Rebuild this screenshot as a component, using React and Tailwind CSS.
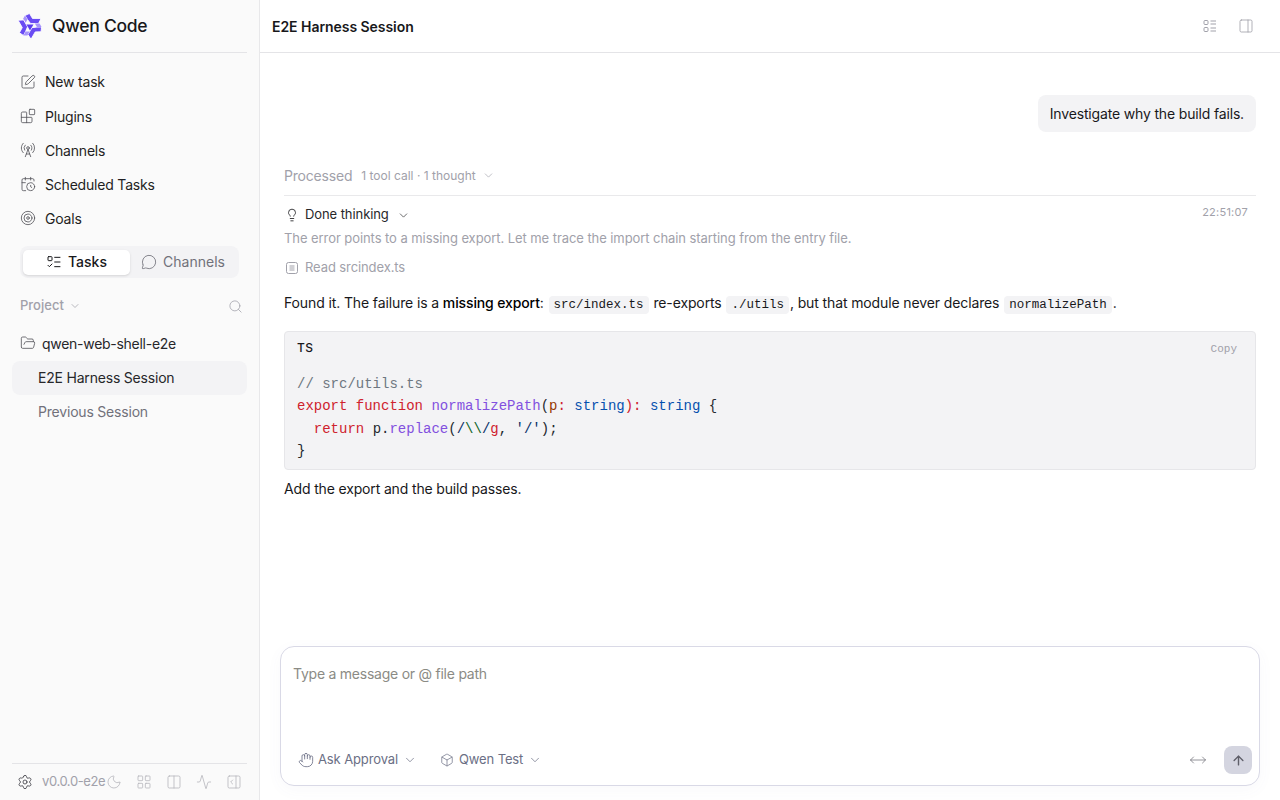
import React from "react";
import { SquarePen, Blocks, RadioTower, CalendarClock, Target, ListTodo, MessageCircle, ChevronDown, Search, FolderOpen, Settings, Moon, LayoutGrid, Columns2, Activity, PanelRightOpen, Lightbulb, Hand, Box, MoveHorizontal, ArrowUp, PanelRight } from "lucide-react";

const Logo = () => (
  <svg width="28" height="28" viewBox="0 0 28 28" fill="none" className="ml-[-1px]">
    {[0, 120, 240].map((r) => (
      <g key={r} transform={`rotate(${r} 14 14)`}>
        <path d="M9 3.5 L13.5 1.5 L16.5 6.5 L25 6.5 L22.5 11.5 L14.5 11.5 L11.5 7.5 Z" fill="#6a4cf3" stroke="#fff" strokeWidth="0.8" strokeLinejoin="round" />
        <path d="M9 3.5 L11.5 7.5 L9.5 11 L7 7 Z" fill="#a794fb" />
      </g>
    ))}
    <path d="M10.5 12.5 L17.5 12.5 L14 18.5 Z" fill="#5b3df0" />
  </svg>
);

const NavRow = ({ icon: Icon, label, className = "h-[34px]" }) => (
  <div className={`flex items-center gap-[9px] pl-[8px] text-[14px] tracking-[-0.2px] text-[#1f1f23] ${className}`}>
    <Icon size={16} strokeWidth={1.25} className="text-[#55555c]" />
    <span>{label}</span>
  </div>
);

const InlineCode = ({ children }) => (
  <code className="mx-[1px] rounded-[4px] bg-[#f3f3f5] px-[5px] py-[2px] font-['Liberation_Mono',monospace] text-[12.5px] tracking-normal text-[#18181b]">{children}</code>
);

const DetailsIcon = () => (
  <svg width="16" height="16" viewBox="0 0 16 16" fill="none" stroke="currentColor" strokeWidth="1">
    <rect x="2" y="2.5" width="4" height="4" rx="1" />
    <rect x="2" y="9.5" width="4" height="4" rx="1" />
    <path d="M8.5 3h5.5M8.5 6h5.5M8.5 10h5.5M8.5 13h5.5" />
  </svg>
);

export default function App() {
  return (
    <div className="flex h-[800px] w-[1280px] overflow-hidden bg-white font-['Inter',sans-serif] text-[#18181b]">
      <aside className="flex h-full w-[260px] shrink-0 flex-col border-r border-[#e8e8ea] bg-[#fafafa] px-[12px]">
        <div className="flex h-[53px] shrink-0 items-center gap-[8px] border-b border-[#e4e4e7] pl-[5px]">
          <Logo />
          <span className="text-[17.5px] font-medium leading-none tracking-[-0.25px] text-[#18181b]">Qwen Code</span>
        </div>
        <nav className="mt-[11px] flex flex-col">
          <NavRow icon={SquarePen} label="New task" className="h-[35px]" />
          <NavRow icon={Blocks} label="Plugins" />
          <NavRow icon={RadioTower} label="Channels" />
          <NavRow icon={CalendarClock} label="Scheduled Tasks" />
          <NavRow icon={Target} label="Goals" />
        </nav>
        <div className="mx-[8px] mt-[11px] flex h-[32px] items-center rounded-[8px] bg-[#f3f3f5] p-[3px] text-[14px]">
          <div className="flex h-[25px] w-[107px] items-center justify-center gap-[6px] rounded-[5px] bg-white pb-[1px] font-medium text-[#18181b] shadow-sm">
            <ListTodo size={16} strokeWidth={1.5} />
            Tasks
          </div>
          <div className="flex h-[25px] flex-1 items-center justify-center gap-[6px] pb-[1px] text-[#71717a]">
            <MessageCircle size={16} strokeWidth={1.25} />
            Channels
          </div>
        </div>
        <div className="mx-[8px] mt-[19px] flex h-[18px] items-center justify-between text-[13px] font-medium text-[#a1a1aa]">
          <div className="flex items-center gap-[5px]">
            Project
            <ChevronDown size={12} strokeWidth={1.5} />
          </div>
          <Search size={15} strokeWidth={1.25} className="mr-[-4px]" />
        </div>
        <div className="mt-[16px] flex h-[24px] items-center gap-[6px] pl-[8px] text-[14px] tracking-[-0.28px] text-[#27272a]">
          <FolderOpen size={16} strokeWidth={1.25} className="text-[#55555c]" />
          qwen-web-shell-e2e
        </div>
        <div className="mt-[6px] flex h-[34px] items-center rounded-[8px] bg-[#f3f3f5] pb-[2px] pl-[26px] text-[14px] tracking-[-0.2px] text-[#27272a]">E2E Harness Session</div>
        <div className="flex h-[34px] items-center pb-[2px] pl-[26px] text-[14px] tracking-[-0.2px] text-[#71717a]">Previous Session</div>
        <div className="mt-auto flex h-[37px] items-center border-t border-[#e4e4e7] pl-[5px] text-[13px] text-[#a1a1aa]">
          <Settings size={16} strokeWidth={1.25} className="shrink-0 text-[#3f3f46]" />
          <span className="ml-[9px] whitespace-nowrap tracking-[-0.4px]">v0.0.0-e2e</span>
          <Moon size={16} strokeWidth={1.25} className="ml-[1px] shrink-0 text-[#b8b8be]" />
          <LayoutGrid size={16} strokeWidth={1.25} className="ml-[14px] shrink-0 text-[#b8b8be]" />
          <Columns2 size={16} strokeWidth={1.25} className="ml-[14px] shrink-0 text-[#b8b8be]" />
          <Activity size={16} strokeWidth={1.25} className="ml-[14px] shrink-0 text-[#b8b8be]" />
          <PanelRightOpen size={16} strokeWidth={1.25} className="ml-[14px] shrink-0 text-[#b8b8be]" />
        </div>
      </aside>

      <main className="flex h-full min-w-0 flex-1 flex-col">
        <header className="flex h-[53px] shrink-0 items-center justify-between border-b border-[#e4e4e7] pl-[12px] pr-[26px]">
          <h1 className="text-[14px] font-semibold tracking-[-0.05px] text-[#18181b]">E2E Harness Session</h1>
          <div className="flex items-center gap-[20px] text-[#a1a1aa]">
            <DetailsIcon />
            <PanelRight size={16} strokeWidth={1.25} />
          </div>
        </header>

        <div className="flex flex-1 flex-col px-[24px]">
          <div className="mt-[42px] flex justify-end">
            <div className="flex h-[37px] items-center rounded-[8px] bg-[#f3f3f5] px-[12px] text-[14px] tracking-[-0.16px] text-[#18181b]">Investigate why the build fails.</div>
          </div>
          <div className="mt-[33px] flex h-[31px] items-center gap-[9px] border-b border-[#e9e9eb] pb-[9px] text-[#a1a1aa]">
            <span className="text-[14px] tracking-[-0.2px]">Processed</span>
            <span className="flex items-center gap-[6px] text-[12px]">1 tool call · 1 thought <ChevronDown size={13} strokeWidth={1.25} /></span>
          </div>
          <div className="mt-[8px] flex h-[22px] items-center justify-between">
            <div className="flex items-center gap-[6px] pl-[1px] text-[13px] tracking-[-0.08px] text-[#27272a]">
              <Lightbulb size={14} strokeWidth={1.5} />
              Done thinking
              <ChevronDown size={13} strokeWidth={1.25} className="ml-[2px]" />
            </div>
            <span className="relative top-[-3px] mr-[8px] text-[11px] tracking-[0.25px] text-[#a1a1aa]">22:51:07</span>
          </div>
          <p className="mt-[2px] h-[20px] text-[13px] leading-[20px] tracking-[-0.07px] text-[#a1a1aa]">The error points to a missing export. Let me trace the import chain starting from the entry file.</p>
          <div className="mt-[10px] flex h-[20px] items-center gap-[6px] pl-[1px] text-[13px] tracking-[-0.1px] text-[#a1a1aa]">
            <svg width="14" height="14" viewBox="0 0 14 14" fill="none" stroke="currentColor" strokeWidth="1">
              <rect x="1.5" y="1.5" width="11" height="11" rx="2" />
              <path d="M4.5 5h5M4.5 7h5M4.5 9h5" />
            </svg>
            Read srcindex.ts
          </div>
          <p className="mt-[15px] h-[20px] text-[14px] leading-[20px] tracking-[-0.12px] text-[#18181b]">
            Found it. The failure is a <strong className="font-medium text-black">missing export</strong>: <InlineCode>src/index.ts</InlineCode> re-exports <InlineCode>./utils</InlineCode>, but that module never declares <InlineCode>normalizePath</InlineCode>.
          </p>
          <div className="mt-[18px] h-[139px] rounded-[4px] border border-[#e6e6e9] bg-[#f3f3f5] px-[12px]">
            <div className="flex h-[31px] items-center justify-between">
              <span className="text-[12px] font-medium tracking-[0.4px] text-[#18181b]">TS</span>
              <span className="mr-[6px] mt-[3px] font-['Liberation_Mono',monospace] text-[11px] text-[#a1a1aa]">Copy</span>
            </div>
            <pre className="mt-[10px] font-['Liberation_Mono',monospace] text-[14px] leading-[22.4px] text-[#24292f]">
              <div className="text-[#6e7781]">// src/utils.ts</div>
              <div><span className="text-[#cf222e]">export function</span> <span className="text-[#8250df]">normalizePath</span>(<span className="text-[#953800]">p</span><span className="text-[#cf222e]">:</span> <span className="text-[#0550ae]">string</span><span className="text-[#cf222e]">)</span><span className="text-[#cf222e]">:</span> <span className="text-[#0550ae]">string</span> {"{"}</div>
              <div>{"  "}<span className="text-[#cf222e]">return</span> p.<span className="text-[#8250df]">replace</span>(<span className="text-[#0a3069]">/</span><span className="text-[#116329]">\\</span><span className="text-[#0a3069]">/</span><span className="text-[#cf222e]">g</span>, <span className="text-[#0a3069]">'/'</span>);</div>
              <div>{"}"}</div>
            </pre>
          </div>
          <p className="mt-[9px] h-[20px] text-[14px] leading-[20px] tracking-[-0.15px] text-[#18181b]">Add the export and the build passes.</p>
        </div>

        <div className="px-[20px] pb-[14px]">
          <div className="flex h-[140px] flex-col rounded-[14px] border border-[#d9d9e6] bg-white pb-[11px] pl-[12px] pr-[7px] pt-[17px] shadow-[0_4px_16px_rgba(90,90,160,0.04)]">
            <div className="text-[14px] leading-[20px] tracking-[-0.24px] text-[#8b8b85]">Type a message or @ file path</div>
            <div className="mt-auto flex items-center justify-between">
              <div className="flex items-center text-[13px] tracking-[-0.12px] text-[#6b6f85]">
                <Hand size={16} strokeWidth={1.25} className="ml-[5px]" />
                <span className="ml-[4px]">Ask Approval</span>
                <ChevronDown size={14} strokeWidth={1.25} className="ml-[5px]" />
                <Box size={14} strokeWidth={1.25} className="ml-[23px]" />
                <span className="ml-[5px]">Qwen Test</span>
                <ChevronDown size={14} strokeWidth={1.25} className="ml-[5px]" />
              </div>
              <div className="flex items-center gap-[17px]">
                <MoveHorizontal size={18} strokeWidth={1} className="text-[#71717a]" />
                <div className="flex h-[28px] w-[28px] items-center justify-center rounded-[8px] bg-[#d4d5e0] text-[#5f5f69]">
                  <ArrowUp size={15} strokeWidth={2.25} />
                </div>
              </div>
            </div>
          </div>
        </div>
      </main>
    </div>
  );
}
